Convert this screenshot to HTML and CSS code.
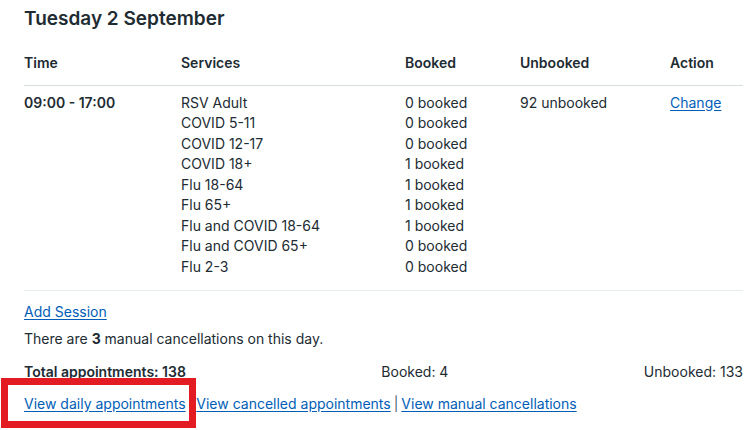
FILE: index.html
```html
<!DOCTYPE html>
<html lang="en">
<head>
<meta charset="utf-8">
<link rel="stylesheet" href="styles.css">
</head>
<body>
<div class="page">
  <h2 class="day-title">Tuesday 2 September</h2>
  <table class="sessions">
    <colgroup>
      <col class="c-time"><col class="c-services"><col class="c-booked"><col class="c-unbooked"><col class="c-action">
    </colgroup>
    <thead>
      <tr><th>Time</th><th>Services</th><th>Booked</th><th>Unbooked</th><th>Action</th></tr>
    </thead>
    <tbody>
      <tr>
        <td class="time">09:00 - 17:00</td>
        <td>
          <div>RSV Adult</div><div>COVID 5-11</div><div>COVID 12-17</div><div>COVID 18+</div><div>Flu 18-64</div><div>Flu 65+</div><div>Flu and COVID 18-64</div><div>Flu and COVID 65+</div><div>Flu 2-3</div>
        </td>
        <td>
          <div>0 booked</div><div>0 booked</div><div>0 booked</div><div>1 booked</div><div>1 booked</div><div>1 booked</div><div>1 booked</div><div>0 booked</div><div>0 booked</div>
        </td>
        <td>92 unbooked</td>
        <td><a href="#">Change</a></td>
      </tr>
    </tbody>
  </table>
  <p class="add"><a href="#">Add Session</a></p>
  <p class="note">There are <b>3</b> manual cancellations on this day.</p>
  <div class="totals">
    <span class="total">Total appointments: 138</span>
    <span>Booked: 4</span>
    <span>Unbooked: 133</span>
  </div>
  <div class="links">
    <a href="#">View daily appointments</a><span class="sep">|</span><a href="#">View cancelled appointments</a><span class="sep">|</span><a href="#">View manual cancellations</a>
  </div>
</div>
<div class="highlight"></div>
</body>
</html>
```
FILE: styles.css
```css
html, body {
  margin: 0;
  padding: 0;
  background: #ffffff;
}
body {
  font-family: Inter, "Liberation Sans", Arial, sans-serif;
  color: #212b32;
  font-size: 14px;
  line-height: 20.5px;
  position: relative;
  width: 753px;
  height: 430px;
  overflow: hidden;
}
.page {
  padding: 0 10px 0 24px;
}
.day-title {
  margin: 0;
  padding-top: 6px;
  font-size: 19px;
  line-height: 26px;
  font-weight: 600;
}
.sessions {
  width: 719px;
  border-collapse: collapse;
  table-layout: fixed;
  margin-top: 15px;
}
.c-time { width: 157px; }
.c-services { width: 224px; }
.c-booked { width: 115px; }
.c-unbooked { width: 150px; }
.c-action { width: 73px; }
.sessions th {
  text-align: left;
  font-weight: 600;
  padding: 6px 0 11px 0;
  border-bottom: 1px solid #d8dde0;
}
.sessions td {
  vertical-align: top;
  padding: 7px 0 13px 0;
  border-bottom: 1px solid #e8edee;
}
.sessions td.time {
  font-weight: 600;
}
a {
  color: #005eb8;
  text-decoration: underline;
  text-underline-offset: 2px;
}
.add {
  margin: 11px 0 0 0;
}
.note {
  margin: 6px 0 0 0;
}
.totals {
  display: flex;
  justify-content: space-between;
  margin-top: 13px;
}
.total {
  font-weight: 600;
}
.links {
  margin-top: 11px;
}
.sep {
  color: #4c6272;
  margin: 0 3px;
}
.highlight {
  position: absolute;
  left: 1px;
  top: 378px;
  width: 181px;
  height: 36px;
  border: 7px solid #e31b23;
}
```
